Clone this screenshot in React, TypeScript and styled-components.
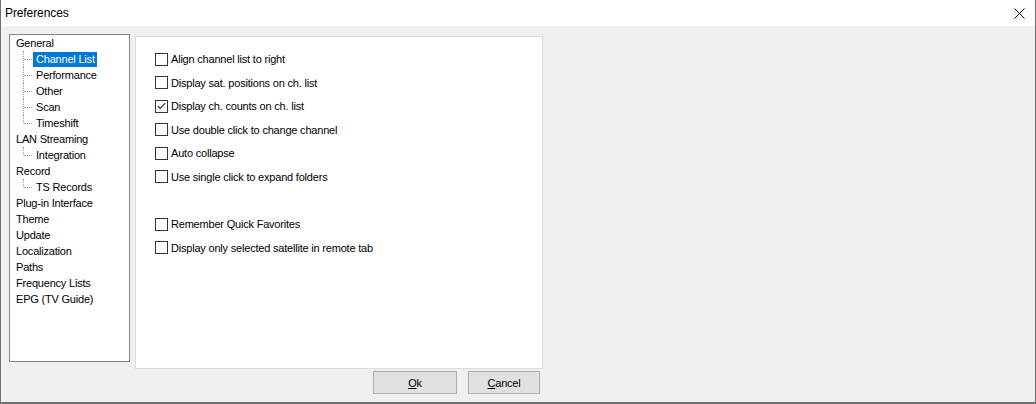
import { createGlobalStyle } from "styled-components"
import styled from "styled-components"

const GlobalStyle = createGlobalStyle`
  html, body {
    margin: 0;
    padding: 0;
    background: #f0f0f0;
  }
  body {
    font-family: "Liberation Sans", Arial, sans-serif;
    font-size: 11px;
    letter-spacing: -0.2px;
    color: #000;
  }
`

const Window = styled.div`
  width: 1036px;
  height: 404px;
  box-sizing: border-box;
  display: flex;
  flex-direction: column;
  background: #f0f0f0;
  border-left: 1px solid #707070;
  border-right: 1px solid #707070;
  border-bottom: 2px solid #707070;
`

const TitleBar = styled.div`
  height: 26px;
  flex-shrink: 0;
  background: #fff;
  display: flex;
  align-items: center;
  justify-content: space-between;
  padding: 0 10px 0 4px;
`

const Title = styled.span`
  font-size: 12px;
  letter-spacing: -0.1px;
`

const CloseButton = styled.div`
  width: 12px;
  height: 12px;
  display: flex;
  align-items: center;
  justify-content: center;
`

const Body = styled.div`
  flex: 1;
  display: flex;
  align-items: flex-start;
  padding: 8px 0 0 8px;
`

const Tree = styled.div`
  width: 121px;
  height: 328px;
  box-sizing: border-box;
  background: #fff;
  border: 1px solid #828790;
  display: flex;
  flex-direction: column;
`

const RootItem = styled.div`
  height: 16px;
  line-height: 16px;
  padding-left: 6px;
  white-space: nowrap;
`

const ChildItem = styled.div`
  height: 16px;
  display: flex;
  align-items: center;
  padding-left: 13px;
  white-space: nowrap;
`

const Connector = styled.span<{ $last?: boolean }>`
  position: relative;
  width: 10px;
  height: 16px;
  flex-shrink: 0;

  &::before {
    content: "";
    position: absolute;
    left: 0;
    top: 0;
    height: ${p => (p.$last ? "8px" : "16px")};
    border-left: 1px dotted #a0a0a0;
  }
  &::after {
    content: "";
    position: absolute;
    left: 1px;
    top: 8px;
    width: 8px;
    border-top: 1px dotted #a0a0a0;
  }
`

const Label = styled.span<{ $selected?: boolean }>`
  height: 15px;
  line-height: 15px;
  padding: 0 2px 0 3px;
  background: ${p => (p.$selected ? "#0078d7" : "transparent")};
  color: ${p => (p.$selected ? "#fff" : "#000")};
`

const RightColumn = styled.div`
  display: flex;
  flex-direction: column;
  margin: 2px 0 0 5px;
`

const Panel = styled.div`
  width: 408px;
  height: 333px;
  box-sizing: border-box;
  background: #fff;
  border: 1px solid #dcdcdc;
  padding: 14px 0 0 19px;
  display: flex;
  flex-direction: column;
  gap: 7.6px;
`

const Option = styled.label`
  height: 16px;
  display: flex;
  align-items: center;
  gap: 3px;
  white-space: nowrap;
`

const Box = styled.span`
  width: 13px;
  height: 13px;
  box-sizing: border-box;
  border: 1px solid #333;
  background: #fff;
  display: flex;
  align-items: center;
  justify-content: center;
  flex-shrink: 0;
`

const Spacer = styled.div`
  height: 16px;
`

const ButtonRow = styled.div`
  display: flex;
  justify-content: flex-end;
  gap: 11px;
  padding: 2px 3px 0 0;
`

const Button = styled.button<{ $width: number }>`
  width: ${p => p.$width}px;
  height: 23px;
  box-sizing: border-box;
  background: #e1e1e1;
  border: 1px solid #adadad;
  font-family: "Liberation Sans", Arial, sans-serif;
  font-size: 11px;
  letter-spacing: -0.2px;
  color: #000;
  padding: 0;
`

const Mnemonic = styled.span`
  text-decoration: underline;
`

type Node = { label: string; children?: string[] }

const tree: Node[] = [
  { label: "General", children: ["Channel List", "Performance", "Other", "Scan", "Timeshift"] },
  { label: "LAN Streaming", children: ["Integration"] },
  { label: "Record", children: ["TS Records"] },
  { label: "Plug-in Interface" },
  { label: "Theme" },
  { label: "Update" },
  { label: "Localization" },
  { label: "Paths" },
  { label: "Frequency Lists" },
  { label: "EPG (TV Guide)" },
]

const options: ({ label: string; checked?: boolean } | null)[] = [
  { label: "Align channel list to right" },
  { label: "Display sat. positions on ch. list" },
  { label: "Display ch. counts on ch. list", checked: true },
  { label: "Use double click to change channel" },
  { label: "Auto collapse" },
  { label: "Use single click to expand folders" },
  null,
  { label: "Remember Quick Favorites" },
  { label: "Display only selected satellite in remote tab" },
]

const CheckMark = () => (
  <svg width="9" height="8" viewBox="0 0 9 8">
    <path d="M0.8 4 L3.2 6.4 L8.2 1.2" fill="none" stroke="#333" strokeWidth="1.2" />
  </svg>
)

export default function App() {
  return (
    <>
      <GlobalStyle />
      <Window>
        <TitleBar>
          <Title>Preferences</Title>
          <CloseButton>
            <svg width="11" height="11" viewBox="0 0 11 11">
              <path d="M0.5 0.5 L10.5 10.5 M10.5 0.5 L0.5 10.5" stroke="#000" strokeWidth="1" />
            </svg>
          </CloseButton>
        </TitleBar>
        <Body>
          <Tree>
            {tree.map(node => (
              <div key={node.label}>
                <RootItem>{node.label}</RootItem>
                {node.children?.map((child, i, arr) => (
                  <ChildItem key={child}>
                    <Connector $last={i === arr.length - 1} />
                    <Label $selected={child === "Channel List"}>{child}</Label>
                  </ChildItem>
                ))}
              </div>
            ))}
          </Tree>
          <RightColumn>
            <Panel>
              {options.map((opt, i) =>
                opt ? (
                  <Option key={opt.label}>
                    <Box>{opt.checked && <CheckMark />}</Box>
                    {opt.label}
                  </Option>
                ) : (
                  <Spacer key={"s" + i} />
                )
              )}
            </Panel>
            <ButtonRow>
              <Button $width={84}>
                <Mnemonic>O</Mnemonic>k
              </Button>
              <Button $width={72}>
                <Mnemonic>C</Mnemonic>ancel
              </Button>
            </ButtonRow>
          </RightColumn>
        </Body>
      </Window>
    </>
  )
}
